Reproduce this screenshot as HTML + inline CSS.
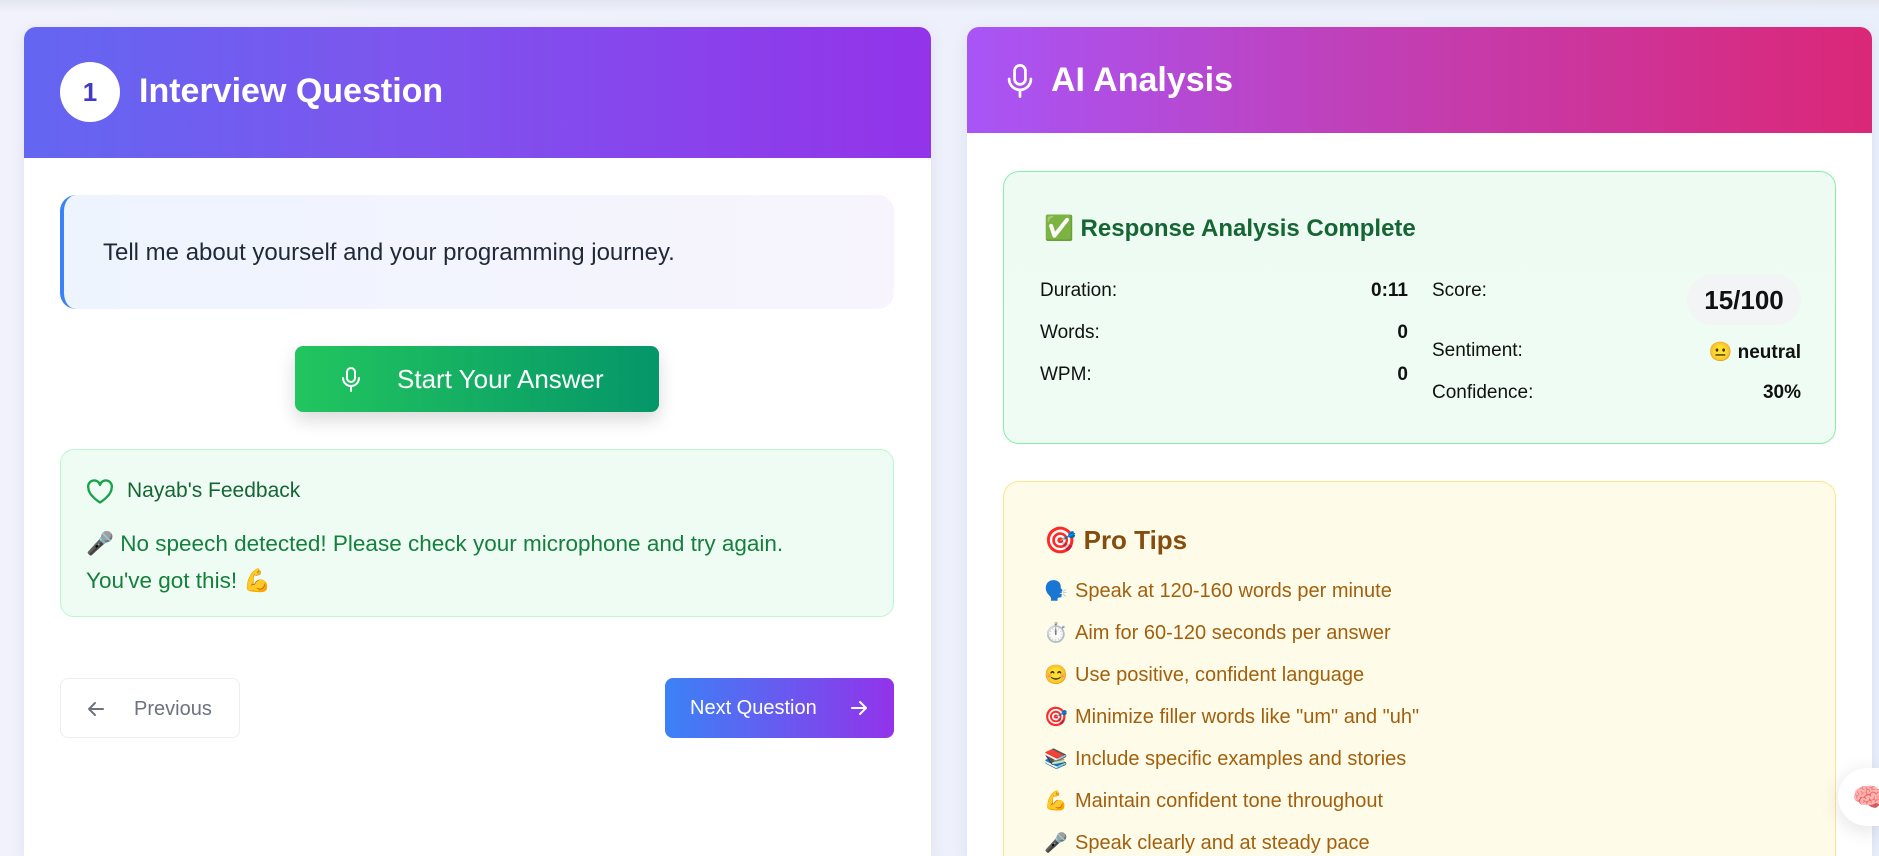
<!DOCTYPE html>
<html><head><meta charset="utf-8"><style>
*{box-sizing:border-box;margin:0;padding:0}
html{width:1879px;height:856px;overflow:hidden}
body{width:1879px;height:856px;overflow:hidden;background:linear-gradient(90deg,#f1f2fb,#eaf0fb);font-family:"Liberation Sans","Noto Sans CJK SC",sans-serif;position:relative}
.top{position:absolute;left:0;top:0;width:1879px;height:12px;background:linear-gradient(#e2e6f0,rgba(234,238,248,0))}
.card{position:absolute;background:#fff;border-radius:12px 12px 0 0;overflow:hidden;box-shadow:0 4px 16px rgba(80,80,140,.10)}
.abs{position:absolute}
.hdr{position:absolute;left:0;top:0;right:0;color:#fff;font-weight:bold;font-size:34px}
.row{position:absolute;font-size:19px;color:#111}
.row b{position:absolute;right:0;top:0}
.tip{position:absolute;left:1044px;font-size:20px;line-height:23px;color:#a2600e;white-space:nowrap}
.tip span{display:inline-block;width:31px;font-size:19px}
svg.arr{position:absolute}
</style></head><body>
<div class="top"></div>
<div class="card" style="left:24px;top:27px;width:907px;height:829px">
 <div class="hdr" style="height:131px;background:linear-gradient(90deg,#6366f1,#7c56ee 40%,#9333ea)">
  <div class="abs" style="left:36px;top:35px;width:60px;height:60px;border-radius:50%;background:#fff;color:#4338ca;font-size:26px;text-align:center;line-height:60px">1</div>
  <div class="abs" style="left:115px;top:45px">Interview Question</div>
 </div>
 <div class="abs" style="left:36px;top:168px;width:834px;height:114px;border-radius:16px;border-left:4px solid #3b82f6;background:linear-gradient(90deg,#eef4fe,#f7f4fd)">
  <div class="abs" style="left:39px;top:44px;font-size:24px;color:#1f2937">Tell me about yourself and your programming journey.</div>
 </div>
 <div class="abs" style="left:271px;top:319px;width:364px;height:66px;border-radius:8px;background:linear-gradient(90deg,#22c55e,#059669);box-shadow:0 8px 18px rgba(0,0,0,.15);color:#fff;font-size:26px">
  <svg class="abs" style="left:47px;top:21px" width="18" height="25" viewBox="0 0 18 25" fill="none" stroke="#fff" stroke-width="2" stroke-linecap="round"><rect x="5" y="1" width="8" height="14" rx="4"/><path d="M1 11a8 8 0 0 0 16 0M9 19v5"/></svg>
  <div class="abs" style="left:102px;top:18px">Start Your Answer</div>
 </div>
 <div class="abs" style="left:36px;top:422px;width:834px;height:168px;border-radius:14px;border:1px solid #bbf7d0;background:#effcf4;color:#15803d">
  <svg class="abs" style="left:25px;top:29px" width="28" height="26" viewBox="0 0 24 22" fill="none" stroke="#16a34a" stroke-width="2" stroke-linejoin="round"><path d="M12 20S2 14 2 7.5A5 5 0 0 1 12 5a5 5 0 0 1 10 2.5C22 14 12 20 12 20z"/></svg>
  <div class="abs" style="left:66px;top:29px;font-size:21px;color:#166534">Nayab's Feedback</div>
  <div class="abs" style="left:25px;top:75px;font-size:22.5px;line-height:37px;width:760px">🎤 No speech detected! Please check your microphone and try again. You've got this! 💪</div>
 </div>
 <div class="abs" style="left:36px;top:651px;width:180px;height:60px;border-radius:8px;border:1px solid #eceef2;background:#fff;color:#6b7280;font-size:20px">
  <svg class="arr" style="left:26px;top:21px" width="18" height="18" viewBox="0 0 18 18" fill="none" stroke="#6b7280" stroke-width="2" stroke-linecap="round" stroke-linejoin="round"><path d="M16 9H2M8 3L2 9l6 6"/></svg>
  <div class="abs" style="left:73px;top:19px">Previous</div>
 </div>
 <div class="abs" style="left:641px;top:651px;width:229px;height:60px;border-radius:8px;background:linear-gradient(90deg,#3b82f6,#9333ea);color:#fff;font-size:20px">
  <div class="abs" style="left:25px;top:19px">Next Question</div>
  <svg class="arr" style="left:185px;top:21px" width="18" height="18" viewBox="0 0 18 18" fill="none" stroke="#fff" stroke-width="2" stroke-linecap="round" stroke-linejoin="round"><path d="M2 9h14M10 3l6 6-6 6"/></svg>
 </div>
</div>
<div class="card" style="left:967px;top:27px;width:905px;height:829px">
 <div class="hdr" style="height:106px;background:linear-gradient(90deg,#a855f7,#c13fb6 45%,#db2777)">
  <svg class="abs" style="left:40px;top:37px" width="26" height="34" viewBox="0 0 18 25" fill="none" stroke="#fff" stroke-width="2" stroke-linecap="round"><rect x="5" y="1" width="8" height="14" rx="4"/><path d="M1 11a8 8 0 0 0 16 0M9 19v5"/></svg>
  <div class="abs" style="left:84px;top:34px">AI Analysis</div>
 </div>
</div>
<div class="abs" style="left:1003px;top:171px;width:833px;height:273px;border-radius:16px;border:1px solid #86efac;background:linear-gradient(#edfbf2,#effcf4)">
 <div class="abs" style="left:40px;top:42px;font-size:24px;font-weight:bold;color:#166534">✅ Response Analysis Complete</div>
 <div class="row" style="left:36px;top:108px;width:368px">Duration:<b>0:11</b></div>
 <div class="row" style="left:36px;top:150px;width:368px">Words:<b>0</b></div>
 <div class="row" style="left:36px;top:192px;width:368px">WPM:<b>0</b></div>
 <div class="row" style="left:428px;top:108px;width:369px">Score:</div>
 <div class="abs" style="left:683px;top:103px;width:114px;height:50px;border-radius:25px;background:#f3f4f6;font-size:26px;font-weight:bold;text-align:center;line-height:50px;color:#111">15/100</div>
 <div class="row" style="left:428px;top:168px;width:369px">Sentiment:<b>😐 neutral</b></div>
 <div class="row" style="left:428px;top:210px;width:369px">Confidence:<b>30%</b></div>
</div>
<div class="abs" style="left:1003px;top:481px;width:833px;height:375px;border-radius:16px 16px 0 0;border:1px solid #fde68a;border-bottom:none;background:#fefbe9">
 <div class="abs" style="left:40px;top:43px;font-size:26px;font-weight:bold;color:#854d0e">🎯 Pro Tips</div>
</div>
<div class="tip" style="top:580px"><span>🗣️</span>Speak at 120-160 words per minute</div>
<div class="tip" style="top:622px"><span>⏱️</span>Aim for 60-120 seconds per answer</div>
<div class="tip" style="top:664px"><span>😊</span>Use positive, confident language</div>
<div class="tip" style="top:706px"><span>🎯</span>Minimize filler words like "um" and "uh"</div>
<div class="tip" style="top:748px"><span>📚</span>Include specific examples and stories</div>
<div class="tip" style="top:790px"><span>💪</span>Maintain confident tone throughout</div>
<div class="tip" style="top:832px"><span>🎤</span>Speak clearly and at steady pace</div>
<div class="abs" style="left:1838px;top:768px;width:41px;height:58px;border-radius:29px 0 0 29px;background:#fff;box-shadow:0 4px 20px rgba(0,0,0,.12);font-size:26px;line-height:58px;padding-left:14px;overflow:hidden;white-space:nowrap">🧠</div>
</body></html>
